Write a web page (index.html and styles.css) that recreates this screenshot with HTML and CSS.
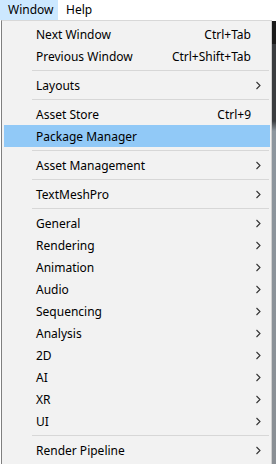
FILE: index.html
```html
<!DOCTYPE html>
<html>
<head>
<meta charset="utf-8">
<link rel="stylesheet" href="styles.css">
</head>
<body>
<div class="menubar">
  <div class="bar-item active">Window</div>
  <div class="bar-item">Help</div>
</div>
<div class="main">
  <div class="menu">
    <div class="item"><span class="label">Next Window</span><span class="shortcut">Ctrl+Tab</span></div>
    <div class="item"><span class="label">Previous Window</span><span class="shortcut">Ctrl+Shift+Tab</span></div>
    <div class="sep"></div>
    <div class="item sub"><span class="label">Layouts</span><svg class="chev" width="5" height="9" viewBox="0 0 5 9"><path d="M0.5 1 L4 4.5 L0.5 8" /></svg></div>
    <div class="sep"></div>
    <div class="item"><span class="label">Asset Store</span><span class="shortcut">Ctrl+9</span></div>
    <div class="item hl"><span class="label">Package Manager</span></div>
    <div class="sep"></div>
    <div class="item sub"><span class="label">Asset Management</span><svg class="chev" width="5" height="9" viewBox="0 0 5 9"><path d="M0.5 1 L4 4.5 L0.5 8" /></svg></div>
    <div class="sep"></div>
    <div class="item sub"><span class="label">TextMeshPro</span><svg class="chev" width="5" height="9" viewBox="0 0 5 9"><path d="M0.5 1 L4 4.5 L0.5 8" /></svg></div>
    <div class="sep"></div>
    <div class="item sub"><span class="label">General</span><svg class="chev" width="5" height="9" viewBox="0 0 5 9"><path d="M0.5 1 L4 4.5 L0.5 8" /></svg></div>
    <div class="item sub"><span class="label">Rendering</span><svg class="chev" width="5" height="9" viewBox="0 0 5 9"><path d="M0.5 1 L4 4.5 L0.5 8" /></svg></div>
    <div class="item sub"><span class="label">Animation</span><svg class="chev" width="5" height="9" viewBox="0 0 5 9"><path d="M0.5 1 L4 4.5 L0.5 8" /></svg></div>
    <div class="item sub"><span class="label">Audio</span><svg class="chev" width="5" height="9" viewBox="0 0 5 9"><path d="M0.5 1 L4 4.5 L0.5 8" /></svg></div>
    <div class="item sub"><span class="label">Sequencing</span><svg class="chev" width="5" height="9" viewBox="0 0 5 9"><path d="M0.5 1 L4 4.5 L0.5 8" /></svg></div>
    <div class="item sub"><span class="label">Analysis</span><svg class="chev" width="5" height="9" viewBox="0 0 5 9"><path d="M0.5 1 L4 4.5 L0.5 8" /></svg></div>
    <div class="item sub"><span class="label">2D</span><svg class="chev" width="5" height="9" viewBox="0 0 5 9"><path d="M0.5 1 L4 4.5 L0.5 8" /></svg></div>
    <div class="item sub"><span class="label">AI</span><svg class="chev" width="5" height="9" viewBox="0 0 5 9"><path d="M0.5 1 L4 4.5 L0.5 8" /></svg></div>
    <div class="item sub"><span class="label">XR</span><svg class="chev" width="5" height="9" viewBox="0 0 5 9"><path d="M0.5 1 L4 4.5 L0.5 8" /></svg></div>
    <div class="item sub"><span class="label">UI</span><svg class="chev" width="5" height="9" viewBox="0 0 5 9"><path d="M0.5 1 L4 4.5 L0.5 8" /></svg></div>
    <div class="sep"></div>
    <div class="item sub"><span class="label">Render Pipeline</span><svg class="chev" width="5" height="9" viewBox="0 0 5 9"><path d="M0.5 1 L4 4.5 L0.5 8" /></svg></div>
  </div>
  <div class="backdrop"></div>
</div>
</body>
</html>
```

FILE: styles.css
```css
html, body {
  margin: 0;
  padding: 0;
  background: #ffffff;
  width: 276px;
  height: 464px;
  overflow: hidden;
}
body {
  font-family: "Noto Sans", "Noto Sans CJK KR", sans-serif;
  font-size: 12px;
  color: #000;
}
.menubar {
  display: flex;
  height: 21px;
  background: #ffffff;
}
.bar-item {
  height: 20px;
  line-height: 20px;
  padding: 0 8px;
}
.bar-item.active {
  width: 42px;
  background: #cce8ff;
}
.main {
  display: flex;
  height: 443px;
}
.menu {
  margin-left: 1px;
  width: 266px;
  padding: 2px 1px 2px 2px;
  border-left: 1px solid #7f7f7f;
  border-right: 1px solid #d0d0d0;
  border-top: 1px solid #d8d8d8;
  margin-top: -1px;
  background: #f2f2f2;
  height: 440px;
}
.item {
  display: flex;
  align-items: center;
  height: 22px;
  padding: 0 19px 0 32px;
}
.item.sub {
  padding-right: 9px;
}
.label {
  flex: 1;
  white-space: nowrap;
}
.shortcut {
  white-space: nowrap;
}
.hl {
  background: #91c9f7;
}
.chev path {
  fill: none;
  stroke: #333;
  stroke-width: 1.1;
}
.sep {
  height: 1px;
  margin: 3px 1px 3px 28px;
  background: #d7d7d7;
}
.backdrop {
  flex: 1;
  background: linear-gradient(to bottom, #1c1c1c 0, #1c1c1c 23px, #3b3d40 23px, #3b3d40 100px, #8d969e 110px, #8a8f94 100%);
}
```
